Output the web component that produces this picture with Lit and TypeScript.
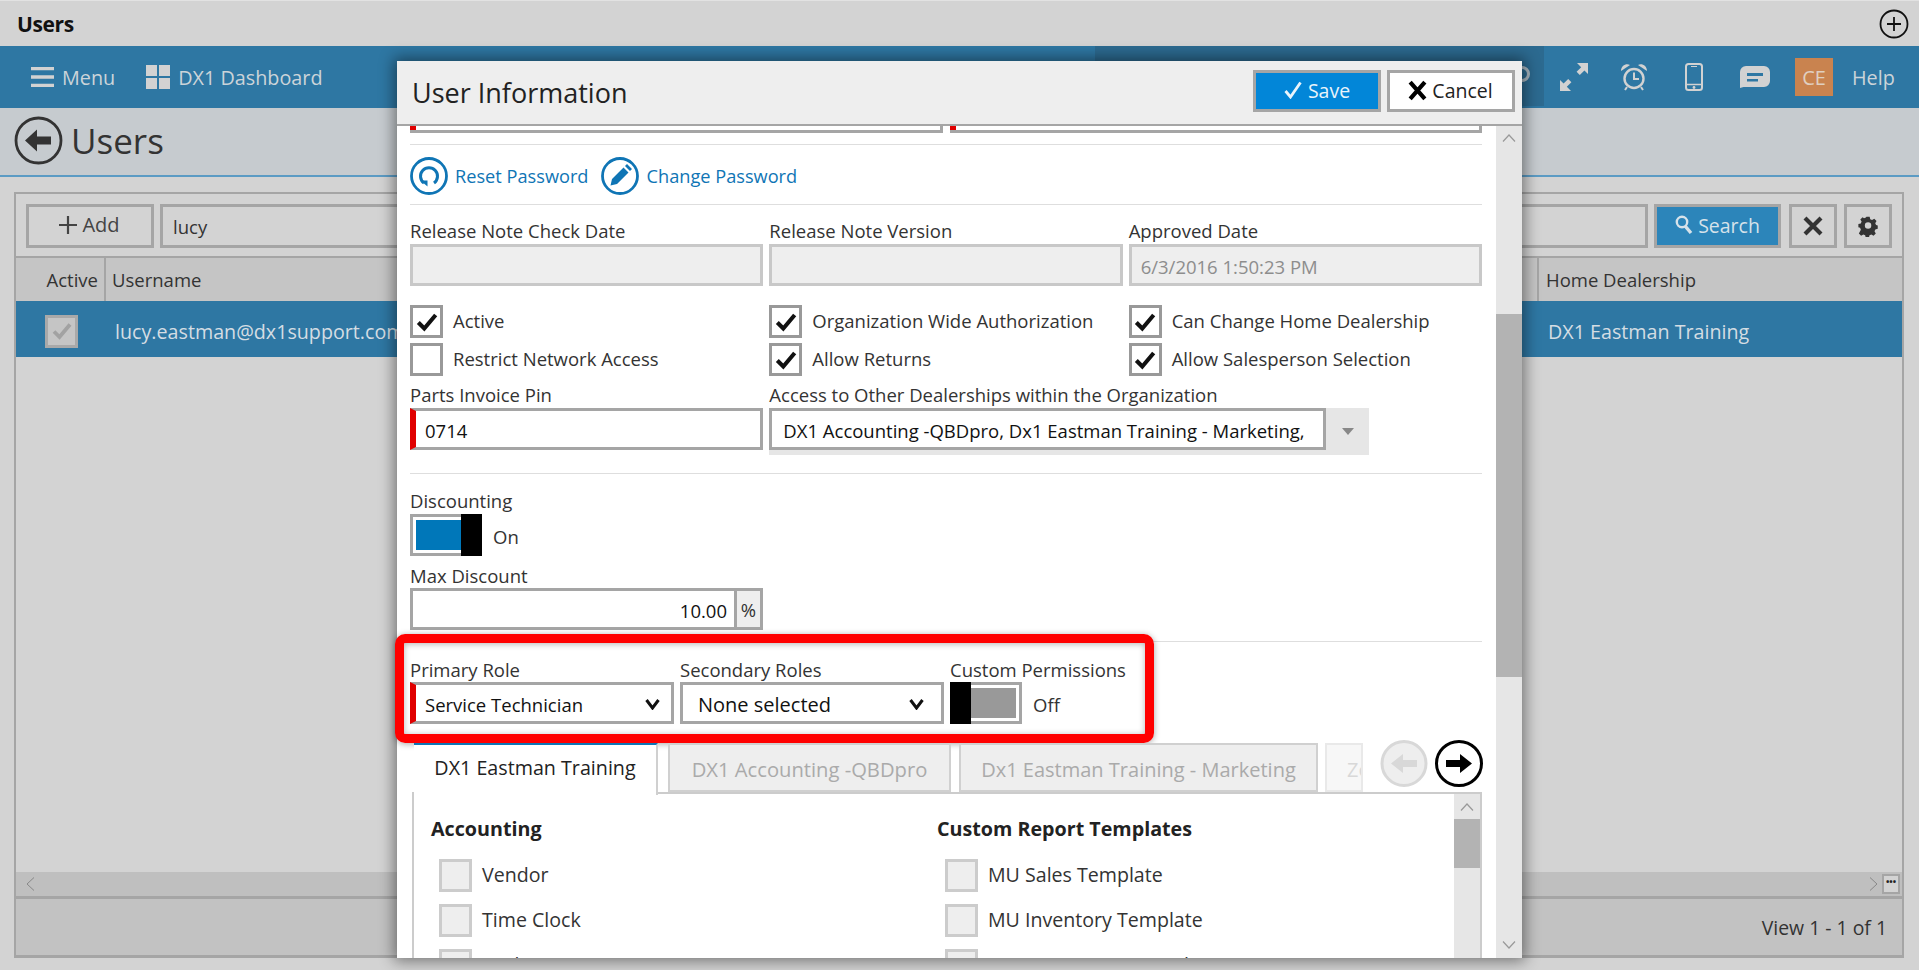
import { LitElement, html, css, svg } from "lit";
import { customElement } from "lit/decorators.js";

const check = svg`<svg class="ck" viewBox="0 0 24 24"><path d="M4 12.5 9.5 18 20 5.5" fill="none" stroke="currentColor" stroke-width="3.8"/></svg>`;
const chev = svg`<svg class="chev" viewBox="0 0 15 12"><path d="M1.5 2 7.5 10 13.5 2" fill="none" stroke="#111" stroke-width="3"/></svg>`;
const upArrow = svg`<svg class="sarr" viewBox="0 0 14 8"><path d="M1 7.5 7 1l6 6.5" fill="none" stroke="#999" stroke-width="1.2"/></svg>`;
const downArrow = svg`<svg class="sarr" viewBox="0 0 14 8"><path d="M1 .5 7 7l6-6.5" fill="none" stroke="#999" stroke-width="1.2"/></svg>`;

@customElement("app-root")
export class AppRoot extends LitElement {
  static styles = css`
    :host { display: block; position: relative; width: 1919px; height: 970px; overflow: hidden; background: #d3d3d3; font-family: "Open Sans", "Noto Sans", sans-serif; font-size: 18.5px; color: #333; }
    * { box-sizing: border-box; }
    svg { display: block; flex: none; }
    .top { height: 46px; display: flex; align-items: center; justify-content: space-between; padding: 0 10px 0 17px; background: #d3d3d3; border-top: 1px solid #e2e2e2; }
    .top b { font-size: 21px; color: #111; letter-spacing: -0.4px; }
    .plus { width: 30px; height: 30px; }
    .nav { height: 62px; background: #2e77a3; display: flex; color: #ccd4d9; font-size: 19.8px; }
    .nav-left { width: 1095px; display: flex; align-items: center; padding-left: 31px; }
    .menu-ic { width: 23px; height: 20px; margin-right: 8px; }
    .grid-ic { width: 24px; height: 24px; margin: 0 8px 0 31px; }
    .nav-dark { width: 449px; height: 60px; background: #2c6a90; display: flex; align-items: center; justify-content: flex-end; padding-right: 14px; }
    .dark-ic { width: 16px; height: 16px; margin-bottom: 5px; }
    .nav-right { flex: 1; display: flex; align-items: center; padding-left: 16px; }
    .nico { color: #d2d2d2; }
    .n1 { width: 28px; height: 28px; margin-right: 32px; }
    .n2 { width: 28px; height: 28px; margin-right: 37px; }
    .n3 { width: 18px; height: 28px; margin-right: 37px; }
    .n4 { width: 30px; height: 22px; margin-right: 25px; }
    .ce { width: 38px; height: 38px; background: #c9834f; color: #e0cfc0; display: flex; align-items: center; justify-content: center; font-size: 20px; margin-right: 19px; }
    .head { height: 69px; background: #c6cbcf; border-bottom: 2px solid #5b9bc4; display: flex; align-items: center; padding: 0 0 2px 14px; font-size: 35px; color: #333; }
    .back { width: 49px; height: 49px; margin-right: 8px; }
    .panel { margin: 15px 15px 0 14px; height: 766px; border: 2px solid #a5a5a5; border-bottom-width: 3px; display: flex; flex-direction: column; }
    .tools { height: 62px; flex: none; display: flex; padding: 10px 10px 8px 10px; gap: 6px; }
    .tb { border: 3px solid #a5a5a5; display: flex; align-items: center; justify-content: center; }
    .add { width: 128px; gap: 4px; color: #444; font-size: 20px; padding: 0 2px 3px 0; }
    .add svg { width: 20px; height: 20px; }
    .search-in { flex: 1; border: 3px solid #a5a5a5; padding-left: 10px; display: flex; align-items: center; }
    .search { width: 127px; background: #2c85ba; color: #d6e2ea; gap: 5px; font-size: 19.5px; margin-right: 2px; padding-bottom: 2px; }
    .search svg { width: 18px; height: 20px; }
    .sq { width: 48px; padding: 0; }
    .sq svg { width: 22px; height: 22px; }
    .gear-b { margin-left: 1px; }
    .ghead { height: 45px; flex: none; display: flex; border-top: 2px solid #a5a5a5; background: #c5c5c5; align-items: stretch; }
    .c-active { width: 90px; border-right: 2px solid #a5a5a5; display: flex; align-items: center; justify-content: flex-end; padding-right: 6px; }
    .c-user { flex: 1; display: flex; align-items: center; padding-left: 6px; }
    .c-home { width: 365px; border-left: 2px solid #a5a5a5; display: flex; align-items: center; padding-left: 7px; }
    .grow { height: 56px; flex: none; background: #2e77a3; color: #d4dde3; display: flex; align-items: center; font-size: 19.7px; padding-top: 4px; }
    .ga { width: 29px; flex: none; }
    .gbox { width: 33px; height: 33px; background: #c5c5c5; border: 3px solid #a9a9a9; color: #a2a2a2; display: flex; align-items: center; justify-content: center; margin-right: 37px; }
    .gbox .ck { width: 24px; height: 24px; }
    .gu { flex: 1; white-space: nowrap; }
    .gh { width: 363px; padding-left: 9px; }
    .gblank { flex: 1; }
    .hsb { height: 24px; flex: none; background: #bfbfbf; display: flex; align-items: center; justify-content: space-between; padding: 0 2px 0 10px; }
    .hsb .sv { width: 9px; height: 14px; }
    .hsb-r { display: flex; align-items: center; gap: 4px; }
    .dots { width: 18px; height: 20px; border: 2px solid #a5a5a5; background: #d3d3d3; font-size: 9px; line-height: 12px; font-weight: 700; text-align: center; color: #222; }
    .foot { height: 59px; flex: none; background: #c2c2c2; border-top: 3px solid #a5a5a5; display: flex; align-items: center; justify-content: flex-end; padding-right: 15px; color: #333; font-size: 19.4px; }

    .modal { position: absolute; left: 397px; top: 61px; width: 1125px; height: 897px; background: #fff; box-shadow: 0 0 14px 3px rgba(0,0,0,.45); display: flex; flex-direction: column; overflow: hidden; }
    .m-head { height: 65px; flex: none; background: #eee; border-bottom: 2px solid #a5a5a5; display: flex; align-items: center; padding: 0 7px 4px 15px; font-size: 27px; color: #222; }
    .m-title { flex: 1; padding-top: 3px; }
    .btn { height: 42px; width: 128px; border: 3px solid #a5a5a5; display: flex; align-items: center; justify-content: center; gap: 6px; font-size: 19.5px; margin-left: 6px; padding-bottom: 1px; }
    .save { background: #0286d8; color: #eaf4fb; }
    .save svg { width: 18px; height: 18px; }
    .cancel { background: #fff; color: #222; gap: 4px; padding-right: 2px; }
    .cancel svg { width: 21px; height: 21px; }
    .m-body { flex: 1; display: flex; min-height: 0; }
    .m-main { width: 1099px; padding: 0 14px 0 13px; overflow: hidden; flex: none; }
    .m-bar { flex: 1; background: #e6e6e6; display: flex; flex-direction: column; align-items: center; }
    .sarr { width: 14px; height: 8px; }
    .m-up { height: 188px; width: 100%; padding-top: 8px; display: flex; justify-content: center; }
    .m-thumb { height: 363px; width: 100%; background: #b3b3b3; flex: none; }
    .m-down { flex: 1; width: 100%; display: flex; justify-content: center; align-items: flex-end; padding-bottom: 9px; }
    .clip { display: grid; grid-template-columns: 533px 532px; column-gap: 7px; }
    .clipf { height: 7px; border: 3px solid #a5a5a5; border-top: 0; display: flex; }
    .redt { width: 6px; margin-left: -3px; height: 4px; background: #e00000; }
    .sep { height: 1px; background: #dedede; }
    .sep1 { margin-top: 11px; }
    .actions { height: 59px; padding-top: 2px; display: flex; align-items: center; color: #0f75b5; font-size: 18.2px; }
    .a-ic { width: 38px; height: 38px; margin-right: 7px; }
    .a-ic2 { margin-left: 12px; margin-right: 8px; }
    .grid3 { display: grid; grid-template-columns: repeat(3, minmax(0, 1fr)); column-gap: 6px; }
    .lab { height: 24px; line-height: 24px; white-space: nowrap; }
    .dates .lab, .disc { line-height: 22px; }
    .f { height: 42px; border: 3px solid #a5a5a5; display: flex; align-items: center; padding: 2px 0 0 9px; background: #fff; color: #111; white-space: nowrap; }
    .ro { background: #eee; border-color: #c8c8c8; color: #8d8d8d; }
    .req { border-left: 6px solid #e00000; }
    .dates { margin-top: 15px; }
    .chks { margin-top: 19px; row-gap: 5px; }
    .chk { height: 33px; display: flex; align-items: center; gap: 10px; white-space: nowrap; padding-bottom: 2px; }
    .box { width: 33px; height: 33px; border: 3px solid #999; background: #fff; color: #111; display: flex; align-items: center; justify-content: center; flex: none; margin-bottom: -2px; }
    .box .ck { width: 26px; height: 26px; }
    .pin { margin-top: 7px; }
    .pin .lab { height: 25px; }
    .multi { display: flex; height: 47px; width: 600px; align-items: flex-start; background: #e6e6e6; }
    .multi .f { flex: none; width: 557px; padding-left: 11px; }
    .multi-c { flex: 1; height: 47px; display: flex; align-items: center; justify-content: center; }
    .tri { width: 0; height: 0; border: 6px solid transparent; border-top: 7px solid #888; border-bottom: 0; }
    .sep2 { margin-top: 18px; }
    .disc { margin-top: 16px; }
    .tog-row { display: flex; align-items: center; gap: 11px; }
    .tog-row span { padding-top: 2px; }
    .tog { width: 72px; height: 42px; border: 3px solid #a5a5a5; display: flex; flex: none; position: relative; padding: 3px; }
    .tog-fill-on { flex: 1; background: #0077b9; margin-right: 15px; }
    .tog-fill-off { flex: 1; background: #999; margin-left: 15px; }
    .thumb { position: absolute; top: -3px; bottom: -3px; width: 21px; background: #000; }
    .t-on { right: -3px; }
    .t-off { left: -3px; }
    .maxl { margin-top: 8px; }
    .maxw { display: flex; width: 353px; height: 42px; border: 3px solid #a5a5a5; }
    .maxv { flex: 1; display: flex; align-items: center; justify-content: flex-end; padding: 2px 7px 0 0; color: #111; }
    .pct { width: 26px; background: #eee; border-left: 3px solid #a5a5a5; display: flex; align-items: center; justify-content: center; }
    .sep3 { margin-top: 11px; }
    .roles { margin-top: 16px; display: grid; grid-template-columns: 264px 264px 1fr; column-gap: 6px; }
    .sel { justify-content: space-between; padding-right: 11px; }
    .sel-2 { padding-left: 15px; padding-right: 17px; font-size: 20px; }
    .chev { width: 15px; height: 12px; }
    .tabs { height: 54px; margin-top: 14px; margin-left: 4px; display: flex; align-items: flex-end; position: relative; z-index: 1; font-size: 20px; }
    .tab { height: 49px; flex: none; background: #eee; border: 2px solid #d0d0d0; color: #aaa; display: flex; align-items: center; justify-content: center; white-space: nowrap; overflow: hidden; padding-top: 3px; }
    .tab-act { width: 244px; height: 52px; margin-bottom: -3px; background: #fff; color: #222; border-width: 0 2px 0 0; border-top: 2px solid #0f75b5; padding: 0 0 5px; font-size: 19.7px; }
    .tab-2 { width: 283px; margin-left: 10px; font-size: 20.2px; }
    .tab-3 { width: 359px; margin-left: 8px; }
    .tab-4 { width: 38px; margin-left: 7px; opacity: .45; justify-content: flex-start; padding-left: 20px; }
    .arrows { margin-left: auto; margin-right: -1px; margin-top: 2px; display: flex; gap: 7px; align-self: flex-start; }
    .arr { width: 48px; height: 47px; }
    .pane { border: 2px solid #ccc; border-bottom: 0; display: flex; height: 200px; margin-left: 2px; }
    .pane-main { flex: 1; display: grid; grid-template-columns: 506px 1fr; padding: 23px 0 0 17px; align-content: start; }
    .pane-bar { width: 26px; background: #e6e6e6; display: flex; flex-direction: column; align-items: center; padding-top: 9px; }
    .pane-thumb { width: 100%; height: 49px; background: #b3b3b3; margin-top: 8px; }
    .sect { height: 24px; line-height: 24px; font-weight: 700; color: #222; font-size: 19.7px; white-space: nowrap; }
    .sect-list { margin-top: 18px; padding-left: 8px; display: flex; flex-direction: column; gap: 12px; font-size: 19.6px; }
    .sbox { border-color: #ccc; background: #eee; }
    .red { position: absolute; left: 395px; top: 634px; width: 759px; height: 109px; border: 9px solid #f00; border-radius: 10px; box-shadow: 0 1px 6px rgba(0,0,0,.35), inset 0 1px 6px rgba(0,0,0,.3); }
  `;

  private chk(label: string, on: boolean) {
    return html`<div class="chk"><span class="box">${on ? check : ""}</span><span>${label}</span></div>`;
  }
  private sitem(label: string) {
    return html`<div class="chk"><span class="box sbox"></span><span>${label}</span></div>`;
  }

  render() {
    return html`
      <div class="top"><b>Users</b>
        <svg class="plus" viewBox="0 0 30 30"><circle cx="15" cy="15" r="13.5" fill="none" stroke="#111" stroke-width="1.8"/><path d="M15 8v14M8 15h14" stroke="#111" stroke-width="1.8"/></svg>
      </div>
      <div class="nav">
        <div class="nav-left">
          <svg class="menu-ic" viewBox="0 0 23 20"><path d="M0 1.5h23M0 10h23M0 18.5h23" stroke="#d2d2d2" stroke-width="3.4"/></svg>
          <span>Menu</span>
          <svg class="grid-ic" viewBox="0 0 24 24"><path d="M0 0h11v11H0zM13 0h11v11H13zM0 13h11v11H0zM13 13h11v11H13z" fill="#d2d2d2"/></svg>
          <span>DX1 Dashboard</span>
        </div>
        <div class="nav-dark"><svg class="dark-ic" viewBox="0 0 16 16"><circle cx="8" cy="8" r="6.500" fill="none" stroke="#a9b8c2" stroke-width="3"/></svg></div>
        <div class="nav-right">
          <svg class="nico n1" viewBox="0 0 28 28"><path fill="currentColor" d="M17 0h11v11l-3.6-3.6-4.6 4.6-3.2-3.2 4.6-4.6zM11 28H0V17l3.6 3.6 4.6-4.6 3.2 3.2-4.6 4.6z"/></svg>
          <svg class="nico n2" viewBox="0 0 28 28"><circle cx="14" cy="15.5" r="9.5" fill="none" stroke="currentColor" stroke-width="2.4"/><path d="M14 9.5v6.5h5" fill="none" stroke="currentColor" stroke-width="2"/><path d="M1 8c0-5 5-8 9-6zM27 8c0-5-5-8-9-6z" fill="currentColor"/><path d="M7 24l-2 3M21 24l2 3" stroke="currentColor" stroke-width="2"/></svg>
          <svg class="nico n3" viewBox="0 0 18 28"><rect x="1" y="1" width="16" height="26" rx="2.5" fill="none" stroke="currentColor" stroke-width="2"/><path d="M2 21.5h14" stroke="currentColor" stroke-width="1.5"/><circle cx="9" cy="24.5" r="1.4" fill="currentColor"/><path d="M6 3.5h6" stroke="currentColor"/></svg>
          <svg class="nico n4" viewBox="0 0 30 22"><path fill-rule="evenodd" fill="currentColor" d="M6 0h18a6 6 0 0 1 6 6v9a6 6 0 0 1-6 6H3.5L0 22V6a6 6 0 0 1 6-6zM7 7v3h16V7zM7 13v2.500h11V13z"/></svg>
          <div class="ce">CE</div><span>Help</span>
        </div>
      </div>
      <div class="head">
        <svg class="back" viewBox="0 0 49 49"><circle cx="24.500" cy="24.500" r="22.500" fill="none" stroke="#333" stroke-width="2.800"/><path d="M11 24.500 23 13.500v7h14v8H23v7z" fill="#333"/></svg>
        <span>Users</span>
      </div>
      <div class="panel">
        <div class="tools">
          <div class="tb add"><svg viewBox="0 0 20 20"><path d="M10 1v18M1 10h18" stroke="#444" stroke-width="2.200"/></svg>Add</div>
          <div class="search-in">lucy</div>
          <div class="tb search"><svg viewBox="0 0 18 20"><circle cx="7" cy="7" r="5.200" fill="none" stroke="currentColor" stroke-width="2.400"/><path d="M10.500 11.500 16 18" stroke="currentColor" stroke-width="3.400"/></svg>Search</div>
          <div class="tb sq"><svg viewBox="0 0 22 22"><path d="M3 3 19 19M19 3 3 19" stroke="#333" stroke-width="4.200"/></svg></div>
          <div class="tb sq gear-b"><svg viewBox="0 0 24 24"><path fill="#333" fill-rule="evenodd" d="M10 1h4l.7 3 2.300 1 2.700-1.600 2.800 2.800L20.900 9l1 2.300 2.100.7v4l-3 .7-1 2.300 1.600 2.700-2.800 2.800-2.700-1.600-2.300 1-.7 3h-4l-.7-3-2.300-1-2.700 1.600-2.800-2.800L3.100 17l-1-2.300L0 14v-4l3-.7 1-2.300-1.600-2.700 2.800-2.800L7 3l2.300-1zM12 8a4 4 0 1 0 0 8 4 4 0 0 0 0-8z" transform="translate(1.500 1) scale(.88)"/></svg></div>
        </div>
        <div class="ghead"><div class="c-active">Active</div><div class="c-user">Username</div><div class="c-home">Home Dealership</div></div>
        <div class="grow">
          <div class="ga"></div>
          <div class="gbox">${check}</div>
          <div class="gu">lucy.eastman@dx1support.com</div>
          <div class="gh">DX1 Eastman Training</div>
        </div>
        <div class="gblank"></div>
        <div class="hsb">
          <svg class="sv" viewBox="0 0 9 14"><path d="M8 .5 1 7l7 6.500" fill="none" stroke="#888"/></svg>
          <div class="hsb-r"><svg class="sv" viewBox="0 0 9 14"><path d="M1 .5 8 7l-7 6.500" fill="none" stroke="#888"/></svg><div class="dots">•••</div></div>
        </div>
        <div class="foot">View 1 - 1 of 1</div>
      </div>

      <div class="modal">
        <div class="m-head">
          <div class="m-title">User Information</div>
          <div class="btn save"><svg viewBox="0 0 18 18"><path d="M1.500 10 6.500 16 16.500 1.500" fill="none" stroke="currentColor" stroke-width="2.800"/></svg>Save</div>
          <div class="btn cancel"><svg viewBox="0 0 20 20"><path d="M3 2 17 18M17 2 3 18" stroke="#000" stroke-width="4"/></svg>Cancel</div>
        </div>
        <div class="m-body">
          <div class="m-main">
            <div class="clip"><div class="clipf"><div class="redt"></div></div><div class="clipf"><div class="redt"></div></div></div>
            <div class="sep sep1"></div>
            <div class="actions">
              <svg class="a-ic" viewBox="0 0 38 38"><circle cx="19" cy="19" r="17.500" fill="none" stroke="#0f75b5" stroke-width="2.800"/><path d="M14 26a8.500 8.500 0 1 1 10 0" fill="none" stroke="#0f75b5" stroke-width="3"/><path d="M10.500 23.500h7v6z" fill="#0f75b5"/></svg>
              <span>Reset Password</span>
              <svg class="a-ic a-ic2" viewBox="0 0 38 38"><circle cx="19" cy="19" r="17.500" fill="none" stroke="#0f75b5" stroke-width="2.800"/><path d="M22.500 10.500 27.500 15.500 16 27l-6.500 1.500L11 22zM24 9l2-2 5 5-2 2z" fill="#0f75b5"/></svg>
              <span>Change Password</span>
            </div>
            <div class="sep"></div>
            <div class="grid3 dates">
              <div><div class="lab">Release Note Check Date</div><div class="f ro"></div></div>
              <div><div class="lab">Release Note Version</div><div class="f ro"></div></div>
              <div><div class="lab">Approved Date</div><div class="f ro">6/3/2016 1:50:23 PM</div></div>
            </div>
            <div class="grid3 chks">
              ${this.chk("Active", true)}
              ${this.chk("Organization Wide Authorization", true)}
              ${this.chk("Can Change Home Dealership", true)}
              ${this.chk("Restrict Network Access", false)}
              ${this.chk("Allow Returns", true)}
              ${this.chk("Allow Salesperson Selection", true)}
            </div>
            <div class="grid3 pin">
              <div><div class="lab">Parts Invoice Pin</div><div class="f req">0714</div></div>
              <div><div class="lab">Access to Other Dealerships within the Organization</div>
                <div class="multi"><div class="f">DX1 Accounting -QBDpro, Dx1 Eastman Training - Marketing,</div><div class="multi-c"><div class="tri"></div></div></div>
              </div>
            </div>
            <div class="sep sep2"></div>
            <div class="lab disc">Discounting</div>
            <div class="tog-row"><div class="tog"><div class="tog-fill-on"></div><div class="thumb t-on"></div></div><span>On</span></div>
            <div class="lab maxl">Max Discount</div>
            <div class="maxw"><div class="maxv">10.00</div><div class="pct">%</div></div>
            <div class="sep sep3"></div>
            <div class="roles">
              <div><div class="lab">Primary Role</div><div class="f req sel"><span>Service Technician</span>${chev}</div></div>
              <div><div class="lab">Secondary Roles</div><div class="f sel sel-2"><span>None selected</span>${chev}</div></div>
              <div><div class="lab">Custom Permissions</div><div class="tog-row"><div class="tog"><div class="thumb t-off"></div><div class="tog-fill-off"></div></div><span>Off</span></div></div>
            </div>
            <div class="tabs">
              <div class="tab tab-act">DX1 Eastman Training</div>
              <div class="tab tab-2">DX1 Accounting -QBDpro</div>
              <div class="tab tab-3">Dx1 Eastman Training - Marketing</div>
              <div class="tab tab-4">Zeus</div>
              <div class="arrows">
                <svg class="arr" viewBox="0 0 48 47"><circle cx="24" cy="23.500" r="22" fill="#eee" stroke="#d8d8d8" stroke-width="3"/><path d="M11 23.500 23 14v6h14v7H23v6z" fill="#d8d8d8"/></svg>
                <svg class="arr" viewBox="0 0 48 47"><ellipse cx="24" cy="23.500" rx="22.500" ry="22" fill="#fff" stroke="#000" stroke-width="3"/><path d="M37 23.500 25 14v6H11v7h14v6z" fill="#000"/></svg>
              </div>
            </div>
            <div class="pane">
              <div class="pane-main">
                <div><div class="sect">Accounting</div>
                  <div class="sect-list">${this.sitem("Vendor")}${this.sitem("Time Clock")}${this.sitem("Cashier Mgr")}</div></div>
                <div><div class="sect">Custom Report Templates</div>
                  <div class="sect-list">${this.sitem("MU Sales Template")}${this.sitem("MU Inventory Template")}${this.sitem("Parts Inventory Template")}</div></div>
              </div>
              <div class="pane-bar">${upArrow}<div class="pane-thumb"></div></div>
            </div>
          </div>
          <div class="m-bar">
            <div class="m-up">${upArrow}</div>
            <div class="m-thumb"></div>
            <div class="m-down">${downArrow}</div>
          </div>
        </div>
      </div>
      <div class="red"></div>
    `;
  }
}
